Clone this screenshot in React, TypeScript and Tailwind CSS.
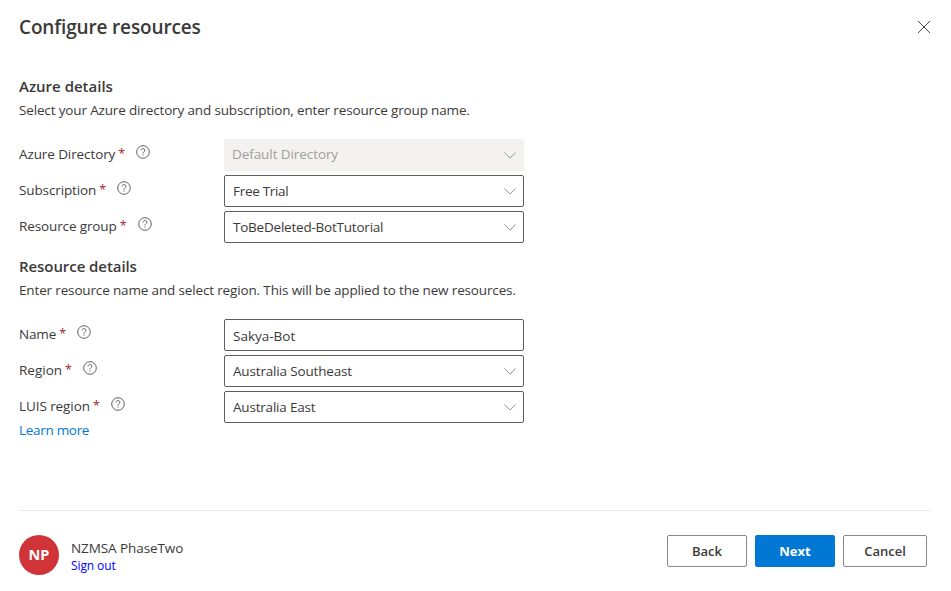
function HelpIcon() {
  return (
    <svg className="h-[14px] w-[14px] shrink-0" viewBox="0 0 14 14" fill="none" stroke="#444340" strokeWidth="0.85">
      <circle cx="7" cy="7" r="6.3" />
      <path d="M5 5.3C5.1 4.2 5.9 3.5 7 3.5s1.9.7 1.9 1.7c0 1.5-1.9 1.5-1.9 3.2" />
      <path d="M6.5 10h1" strokeWidth="1" />
    </svg>
  );
}

function Chevron() {
  return (
    <svg className="h-[7px] w-3 shrink-0" viewBox="0 0 12 7" fill="none" stroke="#8a8886" strokeWidth="0.9">
      <path d="M0.4 0.5L6 6.1L11.6 0.5" />
    </svg>
  );
}

function Label({ text, className }: { text: string; className: string }) {
  return (
    <label className="flex w-[205px] pt-[5px]">
      <span className={`whitespace-nowrap text-[13.5px] leading-5 ${className}`}>{text}</span>
      <span className="ml-[3px] w-[7px] text-[12.5px] leading-5 text-[#a4262c]">*</span>
      <span className="ml-[11px] mt-[1px]">
        <HelpIcon />
      </span>
    </label>
  );
}

function Select({ value, className, disabled }: { value: string; className: string; disabled?: boolean }) {
  return (
    <div
      className={
        disabled
          ? "flex w-[300px] items-center justify-between rounded-[2px] bg-[#f3f2f1] px-2 text-[#a19f9d]"
          : "flex w-[300px] items-center justify-between rounded-[2px] border border-[#605e5c] pl-2 pr-[7px]"
      }
    >
      <span className={`whitespace-nowrap text-[13.5px] leading-5 ${className}`}>{value}</span>
      <Chevron />
    </div>
  );
}

export default function App() {
  return (
    <div className="flex h-[591px] w-[951px] flex-col bg-white pl-[19px] pr-5 font-['Open_Sans','Noto_Sans',sans-serif] text-[#3b3a39]">
      <header className="flex h-[54px] items-center justify-between pr-[1px]">
        <h1 className="text-[19px] font-semibold tracking-[-0.15px]">Configure resources</h1>
        <svg className="h-3 w-3" viewBox="0 0 12 12" stroke="#323130" strokeWidth="0.9">
          <path d="M0 0L12 12M12 0L0 12" />
        </svg>
      </header>

      <h2 className="mt-[21px] text-[15px] font-semibold leading-[22px]">Azure details</h2>
      <p className="mt-[3px] text-[13.5px] leading-5 tracking-[-0.15px]">
        Select your Azure directory and subscription, enter resource group name.
      </p>
      <div className="mt-[19px] flex flex-col gap-1">
        <div className="flex h-8">
          <Label text="Azure Directory" className="tracking-[-0.1px]" />
          <Select value="Default Directory" className="-mt-[2px] tracking-[-0.08px]" disabled />
        </div>
        <div className="flex h-8">
          <Label text="Subscription" className="tracking-[-0.12px]" />
          <Select value="Free Trial" className="tracking-[-0.3px]" />
        </div>
        <div className="flex h-8">
          <Label text="Resource group" className="tracking-[-0.12px]" />
          <Select value="ToBeDeleted-BotTutorial" className="tracking-[-0.22px]" />
        </div>
      </div>

      <h2 className="mt-3 text-[15px] font-semibold leading-[22px] tracking-[-0.07px]">Resource details</h2>
      <p className="mt-[3px] text-[13.5px] leading-5 tracking-[-0.15px]">
        Enter resource name and select region. This will be applied to the new resources.
      </p>
      <div className="mt-[19px] flex flex-col gap-1">
        <div className="flex h-8">
          <Label text="Name" className="tracking-[-0.15px]" />
          <div className="flex w-[300px] items-center rounded-[2px] border border-[#605e5c] px-2 pt-[2px] text-[13.5px] leading-5">
            Sakya-Bot
          </div>
        </div>
        <div className="flex h-8">
          <Label text="Region" className="tracking-normal" />
          <Select value="Australia Southeast" className="tracking-[-0.17px]" />
        </div>
        <div className="flex h-8">
          <Label text="LUIS region" className="tracking-[-0.08px]" />
          <Select value="Australia East" className="tracking-[-0.2px]" />
        </div>
      </div>
      <a className="-mt-[3px] block text-[13.5px] leading-5 tracking-[-0.3px] text-[#0078d4]">Learn more</a>

      <footer className="mt-auto flex h-[81px] border-t border-[#edebe9] pt-6">
        <div className="flex h-10 w-10 items-center justify-center rounded-full bg-[#d13438] text-[14.5px] font-bold text-white">
          NP
        </div>
        <div className="ml-3 flex flex-col pt-[3px]">
          <span className="text-[13.5px] leading-5 tracking-[-0.08px]">NZMSA PhaseTwo</span>
          <span className="text-[12px] leading-4 tracking-[-0.1px] text-[#0000ff]">Sign out</span>
        </div>
        <div className="ml-auto mr-1 flex h-8 gap-2 text-[13px] font-semibold">
          <button className="w-20 rounded-[2px] border border-[#8a8886] pt-[2px]">Back</button>
          <button className="w-20 rounded-[2px] bg-[#0078d4] pt-[2px] font-bold text-white">Next</button>
          <button className="w-[84px] rounded-[2px] border border-[#8a8886] pt-[2px]">Cancel</button>
        </div>
      </footer>
    </div>
  );
}
